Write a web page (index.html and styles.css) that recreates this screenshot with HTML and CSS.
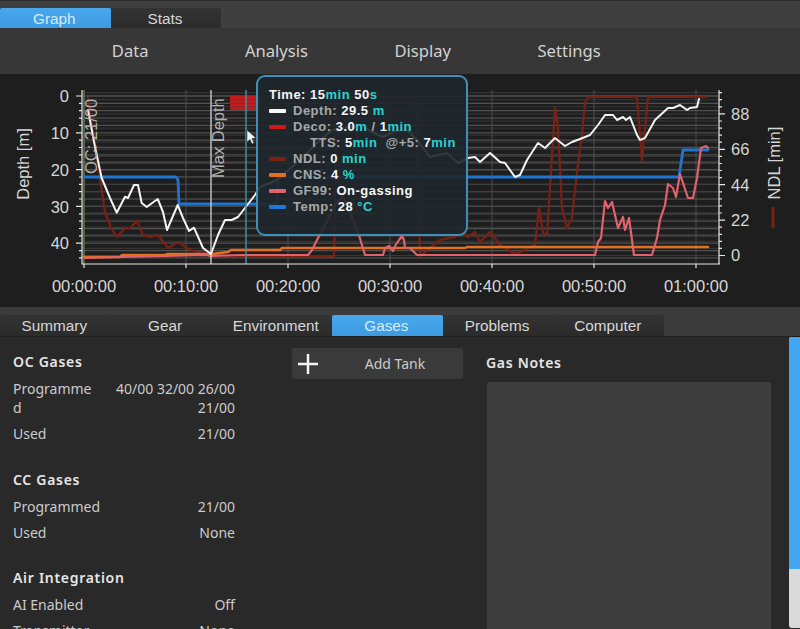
FILE: index.html
```html
<!DOCTYPE html>
<html lang="en">
<head>
<meta charset="utf-8">
<title>Dive Log</title>
<link rel="stylesheet" href="styles.css">
</head>
<body>
<div class="app">
  <nav class="view-tabs">
    <div class="tab tab-active">Graph</div>
    <div class="tab">Stats</div>
  </nav>
  <nav class="menu">
    <div>Data</div>
    <div>Analysis</div>
    <div>Display</div>
    <div>Settings</div>
  </nav>
  <section class="chart">
    <svg class="plot" viewBox="0 74 800 233" width="800" height="233" aria-label="Dive profile">
      <path class="grid-a" d="M84 96H718M84 103.4H718M84 110.7H718M84 118.1H718M84 125.4H718M84 132.8H718M84 140.2H718M84 147.5H718M84 154.9H718M84 162.2H718M84 169.6H718M84 177H718M84 184.3H718M84 191.7H718M84 199H718M84 206.4H718M84 213.8H718M84 221.1H718M84 228.5H718M84 235.8H718M84 243.2H718M84 250.6H718M84 257.9H718"/>
      <path class="grid-b" d="M84 92.7H718M84 99.7H718M84 106.8H718M84 113.9H718M84 121H718M84 128.1H718M84 135.1H718M84 142.2H718M84 149.3H718M84 156.4H718M84 163.5H718M84 170.5H718M84 177.6H718M84 184.7H718M84 191.8H718M84 198.9H718M84 205.9H718M84 213H718M84 220.1H718M84 227.2H718M84 234.3H718M84 241.3H718M84 248.4H718M84 255.5H718"/>
      <path class="grid-v" d="M186 90V264M288 90V264M390 90V264M492 90V264M594 90V264M696 90V264"/>
      <path class="start-line" d="M84 90V264"/>
      <rect class="deco" x="230" y="96" width="30" height="14"/>
      <path class="grid-over" d="M230 99.7H260M230 103.4H260M230 106.8H260"/>
      <polyline class="ndl" points="88,98 92,125 97,155 100,178 105,212 111,228 117,237 125,228 130,228 137,221 143,235 150,237 158,235 168,248 178,242 190,250 203,253 211,255 240,256 300,256 334,256 335,220 336,97 416,97 418,180 420,256 440,240 455,237 462,232 468,237 475,232 480,242 490,232 500,245 515,254 525,250 535,245 539,208 543,233 547,235 550,188 555,108 558,128 562,208 567,228 572,218 577,172 582,135 585,102 588,97 637,97 642,160 648,97 706,97"/>
      <polyline class="temp" points="85,177 176,177 178,180 179,204 277,204 278,177 679,177 683,150 708,150"/>
      <polyline class="cns" points="84,257 120,257 122,255 165,255 167,254 212,254 228,252 231,250 280,250 282,248 465,248 467,247 708,247"/>
      <polyline class="gf" points="85,258 120,257 165,256 205,255 211,256 240,255 308,255 312,250 317,240 325,225 335,205 343,196 350,213 358,232 365,255 383,255 385,248 389,246 393,251 395,246 399,240 402,236 404,240 405,248 410,248 417,255 590,255 595,255 598,242 601,238 605,201 608,208 612,202 618,228 623,217 625,230 629,218 634,255 652,255 657,238 660,220 665,205 668,184 673,188 676,197 680,174 688,198 693,198 697,178 701,148 706,146 708,148"/>
      <polyline class="depth" points="88,110 95,147 101.700,178 110,198 116.700,212.700 125,196.700 128,198 134,185 138,185 141.700,203 146.700,207 157.700,199 163,212 167,230 177.700,205 183,218 189,231 194,227.700 203,248 211,254 218,235 225,220 231.700,220 238,217 245,208 255,195 260,187 277,180 300,160 317,143 332,130 345,128 360,125 372,132 383,137 395,131 407,130 417,140 430,157 447,153 458,163 468,158 475,157 480,162 490,153 500,162 505,163 515,177 520,175 527,160 538,143 545,148 555,138 565,146 572,142 580,139 590,135 598,125 605,115 613,115 617,120 623,117 626,120 630,117 637,135 640,140 645,138 655,120 668,108 673,108 680,105 687,110 690,108 697,107 699,99"/>
      <path class="max-line" d="M211 90V264"/>
      <path class="cursor-line" d="M246 90V264"/>
      <path class="arrow" d="M247 130V142L250 139.500 252 144 254 143 252 138.500 256 138Z"/>
      <path class="axis" d="M82 90V264H720M719 90V264M84 264V268M186 264V268M288 264V268M390 264V268M492 264V268M594 264V268M696 264V268"/>
      <path class="axis" d="M76 96H82M79 103.400H82M79 110.700H82M79 118.100H82M79 125.400H82M76 132.800H82M79 140.200H82M79 147.500H82M79 154.900H82M79 162.200H82M76 169.600H82M79 177H82M79 184.300H82M79 191.700H82M79 199H82M76 206.400H82M79 213.800H82M79 221.100H82M79 228.500H82M79 235.800H82M76 243.200H82M79 250.600H82M79 257.900H82"/>
      <path class="axis" d="M719 92.700H722M719 99.700H722M719 106.800H722M719 113.900H725M719 121H722M719 128.100H722M719 135.100H722M719 142.200H722M719 149.300H725M719 156.400H722M719 163.500H722M719 170.500H722M719 177.600H722M719 184.700H725M719 191.800H722M719 198.900H722M719 205.900H722M719 213H722M719 220.100H725M719 227.200H722M719 234.300H722M719 241.300H722M719 248.400H722M719 255.500H725"/>
      <g class="tick-left">
        <text x="69" y="102">0</text>
        <text x="69" y="139">10</text>
        <text x="69" y="176">20</text>
        <text x="69" y="213">30</text>
        <text x="69" y="249">40</text>
      </g>
      <g class="tick-right">
        <text x="731" y="120">88</text>
        <text x="731" y="155">66</text>
        <text x="731" y="191">44</text>
        <text x="731" y="226">22</text>
        <text x="731" y="261">0</text>
      </g>
      <g class="tick-bottom">
        <text x="84" y="292">00:00:00</text>
        <text x="186" y="292">00:10:00</text>
        <text x="288" y="292">00:20:00</text>
        <text x="390" y="292">00:30:00</text>
        <text x="492" y="292">00:40:00</text>
        <text x="594" y="292">00:50:00</text>
        <text x="696" y="292">01:00:00</text>
      </g>
      <text class="side-label" transform="translate(29 164) rotate(-90)">Depth [m]</text>
      <text class="side-label" transform="translate(780 163) rotate(-90)">NDL [min]</text>
      <path class="ndl-key" d="M773 207V228"/>
      <text class="event-label" transform="translate(97 174) rotate(-90)">OC: 21/00</text>
      <text class="event-label" transform="translate(224 178) rotate(-90)">Max Depth</text>
    </svg>
    <div class="tooltip">
      <div class="tip-row"><span class="v">Time: 15</span><span class="u">min</span><span class="v"> 50</span><span class="u">s</span></div>
      <div class="tip-row"><i class="key key-depth"></i><span class="k">Depth:</span><span class="v"> 29.5 </span><span class="u">m</span></div>
      <div class="tip-row"><i class="key key-deco"></i><span class="k">Deco:</span><span class="v"> 3.0</span><span class="u">m</span><span class="k"> / </span><span class="v">1</span><span class="u">min</span></div>
      <div class="tip-row tip-indent"><span class="k">TTS:</span><span class="v"> 5</span><span class="u">min</span><span class="k">  @+5:</span><span class="v"> 7</span><span class="u">min</span></div>
      <div class="tip-row"><i class="key key-ndl"></i><span class="k">NDL:</span><span class="v"> 0 </span><span class="u">min</span></div>
      <div class="tip-row"><i class="key key-cns"></i><span class="k">CNS:</span><span class="v"> 4 </span><span class="u">%</span></div>
      <div class="tip-row"><i class="key key-gf"></i><span class="k">GF99:</span><span class="v"> On-gassing</span></div>
      <div class="tip-row"><i class="key key-temp"></i><span class="k">Temp:</span><span class="v"> 28 </span><span class="u">°C</span></div>
    </div>
  </section>
  <nav class="detail-tabs">
    <div class="tab">Summary</div>
    <div class="tab">Gear</div>
    <div class="tab">Environment</div>
    <div class="tab tab-active">Gases</div>
    <div class="tab">Problems</div>
    <div class="tab">Computer</div>
  </nav>
  <main class="content">
    <div class="gas-info">
      <h2 class="heading">OC Gases</h2>
      <div class="row row-wrap"><span class="label">Programmed</span><span class="value">40/00 32/00 26/00 21/00</span></div>
      <div class="row"><span class="label">Used</span><span class="value">21/00</span></div>
      <h2 class="heading heading-next">CC Gases</h2>
      <div class="row"><span class="label">Programmed</span><span class="value">21/00</span></div>
      <div class="row"><span class="label">Used</span><span class="value">None</span></div>
      <h2 class="heading heading-next">Air Integration</h2>
      <div class="row"><span class="label">AI Enabled</span><span class="value">Off</span></div>
      <div class="row"><span class="label">Transmitter</span><span class="value">None</span></div>
    </div>
    <div class="tanks">
      <button class="add-tank" type="button">
        <svg class="plus" viewBox="0 0 20 20" width="20" height="20"><path d="M10 0V20M0 10H20"/></svg>
        <span class="add-label">Add Tank</span>
      </button>
    </div>
    <div class="notes">
      <h2 class="heading">Gas Notes</h2>
      <div class="notes-box"></div>
    </div>
    <div class="scrollbar"><div class="scroll-thumb"></div></div>
  </main>
</div>
</body>
</html>
```
FILE: styles.css
```css
* { box-sizing: border-box; }
html, body { margin: 0; height: 100%; background: #292929; overflow: hidden; }
.app { width: 800px; height: 629px; display: flex; flex-direction: column; overflow: hidden; font-family: "Noto Sans", sans-serif; color: #cfcfcf; }

.view-tabs { height: 28px; flex: none; padding-top: 8px; display: flex; background: #3f3f3f; border-top: 1px solid #2a2a2a; }
.view-tabs .tab { margin-top: -1px; }
.tab { width: 110.700px; height: 21px; display: flex; align-items: center; justify-content: center; padding-right: 2px; font: 15.300px "Liberation Sans", sans-serif; color: #d8d8d8; background: linear-gradient(#333, #2b2b2b); border-radius: 2px 2px 0 0; }
.tab-active { background: linear-gradient(#48a8ee, #3d9ae0); color: #d4ebfb; }

.menu { height: 46px; flex: none; display: grid; grid-template-columns: repeat(4, 146.300px); padding: 0 0 1px 57px; align-items: center; text-align: center; background: #373737; font-size: 16.600px; color: #d2d2d2; }

.chart { position: relative; height: 233px; flex: none; background: #1e1e1e; }
.plot { display: block; }
.grid-a { stroke: #4f4f4f; stroke-width: 1.300; fill: none; }
.grid-b { stroke: #383838; stroke-width: 1; fill: none; }
.grid-v { stroke: #4c4c4c; stroke-width: 1; fill: none; }
.start-line { stroke: #5d7a50; stroke-width: 1.500; fill: none; }
.deco { fill: #c21b1b; }
.grid-over { stroke: #7a3030; stroke-width: 1; fill: none; }
polyline { fill: none; stroke-linejoin: round; stroke-linecap: round; }
.ndl { stroke: #7a2116; stroke-width: 2.200; }
.temp { stroke: #1f74cf; stroke-width: 2.800; }
.cns { stroke: #e2701f; stroke-width: 2.500; }
.gf { stroke: #e0626c; stroke-width: 2.200; }
.depth { stroke: #f4f4f4; stroke-width: 2; }
.max-line { stroke: #e4e4e4; stroke-width: 1.200; fill: none; }
.cursor-line { stroke: #3f8bad; stroke-width: 1.500; fill: none; }
.arrow { fill: #f2f2f2; stroke: #222; stroke-width: .5; }
.axis { stroke: #e6e6e6; stroke-width: 1.200; fill: none; }
.ndl-key { stroke: #7a2116; stroke-width: 3; fill: none; }
.plot text { font-family: "Liberation Sans", sans-serif; font-size: 16.500px; fill: #d6d6d6; }
.tick-left text { text-anchor: end; }
.tick-bottom text { text-anchor: middle; }
.side-label { text-anchor: middle; }
.plot .event-label { fill: #b0b0b0; }

.tooltip { position: absolute; left: 256px; top: 1px; width: 212px; height: 161px; padding: 10px 11px; border: 2px solid #3f8fb8; border-radius: 9px; background: rgba(31, 39, 44, .9); font: bold 13px/16px "Liberation Sans", sans-serif; letter-spacing: .5px; }
.tip-row { display: flex; align-items: center; height: 16px; white-space: pre; }
.tip-indent { padding-left: 41px; }
.k { color: #a8a8a8; }
.v { color: #f6f6f6; }
.u { color: #2bd2cf; }
.key { width: 17px; height: 3.500px; margin-right: 7px; flex: none; border-radius: 1px; }
.key-depth { background: #f6f6f6; }
.key-deco { background: #d01818; }
.key-ndl { background: #7a2116; }
.key-cns { background: #e2701f; }
.key-gf { background: #e0626c; }
.key-temp { background: #1f78d8; }

.detail-tabs { height: 30px; flex: none; padding-top: 8px; display: flex; background: #3b3b3b; border-bottom: 1px solid #1f1f1f; }

.content { flex: 1; min-height: 0; display: flex; position: relative; background: #292929; font-size: 14px; color: #cbcbcb; overflow: hidden; }
.gas-info { width: 222px; margin-left: 13px; padding-top: 14px; flex: none; }
.heading { margin: 0; font-size: 14px; line-height: 21px; font-weight: 600; letter-spacing: .7px; color: #e6e6e6; }
.heading-next { margin-top: 25.500px; }
.row { display: flex; justify-content: space-between; margin-top: 7px; line-height: 19px; }
.row-wrap .label { width: 80px; overflow-wrap: anywhere; }
.row-wrap .value { width: 119px; }
.value { text-align: right; }
.tanks { width: 171px; margin-left: 57px; padding-top: 11px; flex: none; }
.add-tank { width: 100%; height: 31px; padding: 0 6px; display: flex; align-items: center; border: 0; border-radius: 3px; background: #3a3a3a; font: 14px "Noto Sans", sans-serif; color: #cbcbcb; }
.plus { flex: none; stroke: #f4f4f4; stroke-width: 2.500; fill: none; }
.add-label { flex: 1; text-align: center; padding-left: 15px; }
.notes { width: 285px; margin-left: 23px; padding-top: 15px; flex: none; display: flex; flex-direction: column; }
.notes-box { flex: 1; margin: 9px 0 0 1px; background: #3d3d3d; border-radius: 2px 2px 0 0; }
.scrollbar { position: absolute; right: 0; top: 0; bottom: 1px; width: 11px; background: #dadada; border-radius: 3px 0 0 3px; overflow: hidden; }
.scroll-thumb { height: 232px; background: #42a6f2; }
```
